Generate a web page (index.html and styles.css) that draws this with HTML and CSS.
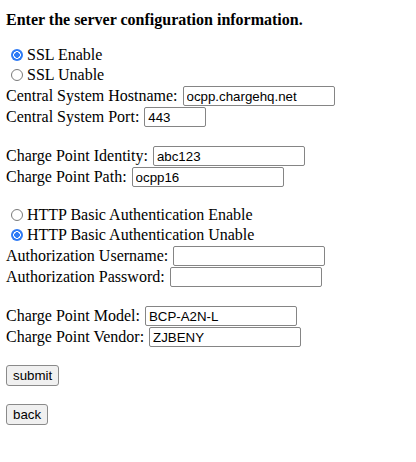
FILE: index.html
```html
<!DOCTYPE html>
<html>
<head>
    <meta charset="utf-8">
    <title>Server Configuration</title>
    <link rel="stylesheet" href="styles.css">
</head>
<body>
    <form class="config-form">
        <div class="title">Enter the server configuration information.</div>

        <div class="group">
            <label class="row radio-row"><input type="radio" name="ssl" checked>SSL Enable</label>
            <label class="row radio-row"><input type="radio" name="ssl">SSL Unable</label>
            <div class="row">Central System Hostname: <input type="text" class="field" value="ocpp.chargehq.net"></div>
            <div class="row">Central System Port: <input type="text" class="field field-short" value="443"></div>
        </div>

        <div class="group">
            <div class="row">Charge Point Identity: <input type="text" class="field" value="abc123"></div>
            <div class="row">Charge Point Path: <input type="text" class="field" value="ocpp16"></div>
        </div>

        <div class="group">
            <label class="row radio-row"><input type="radio" name="auth">HTTP Basic Authentication Enable</label>
            <label class="row radio-row"><input type="radio" name="auth" checked>HTTP Basic Authentication Unable</label>
            <div class="row">Authorization Username: <input type="text" class="field" value=""></div>
            <div class="row">Authorization Password: <input type="password" class="field" value=""></div>
        </div>

        <div class="group">
            <div class="row">Charge Point Model: <input type="text" class="field" value="BCP-A2N-L"></div>
            <div class="row">Charge Point Vendor: <input type="text" class="field" value="ZJBENY"></div>
        </div>

        <div class="group">
            <button type="button" class="btn">submit</button>
        </div>
        <div class="group">
            <button type="button" class="btn" onclick="history.back()">back</button>
        </div>
    </form>
</body>
</html>
```

FILE: styles.css
```css
body {
    margin: 0;
    padding: 11px 6px 0 6px;
    font-family: "Liberation Serif", "Times New Roman", serif;
    font-size: 16px;
    color: #000;
    background: #fff;
}

.title {
    font-weight: bold;
    height: 18px;
    line-height: 18px;
    margin-bottom: 16px;
}

.group {
    margin-bottom: 18px;
}

.row {
    display: flex;
    align-items: center;
    height: 21px;
    line-height: 21px;
    white-space: pre;
}
.radio-row {
    height: 20px;
    line-height: 20px;
}

input[type="radio"] {
    appearance: none;
    -webkit-appearance: none;
    box-sizing: border-box;
    width: 12px;
    height: 12px;
    margin: 0 4px 0 5px;
    border: 1px solid #7a7a7a;
    border-radius: 50%;
    background: #fff;
}
input[type="radio"]:checked {
    border: none;
    background: radial-gradient(circle, #2f7bf5 0 2.6px, #fff 3px 3.6px, #2f7bf5 4px);
}

.field {
    box-sizing: border-box;
    width: 152px;
    height: 20px;
    margin: 0 0 0 1px;
    padding: 1px 3px 0 3px;
    border: 1px solid #858585;
    border-radius: 2px;
    font-family: "Liberation Sans", Arial, sans-serif;
    font-size: 13.3px;
    color: #000;
    background: #fff;
}
.field-short {
    width: 62px;
}

.btn {
    box-sizing: border-box;
    height: 21px;
    padding: 0 6px;
    border: 1px solid #8a8a8a;
    border-radius: 3px;
    background: #f0f0f0;
    font-family: "Liberation Sans", Arial, sans-serif;
    font-size: 13.3px;
    color: #000;
}
```
